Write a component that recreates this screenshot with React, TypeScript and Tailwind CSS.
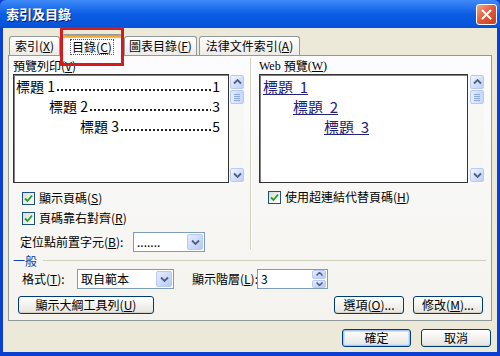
import { FC, ReactNode } from "react";

const FONT = { fontFamily: '"Noto Sans CJK TC", "Noto Sans", sans-serif' };

const Mn: FC<{ text: string; k: string; tail?: string }> = ({ text, k, tail = "" }) => (
  <>
    {text}(<span className="underline">{k}</span>){tail}
  </>
);

const Arrow: FC<{ down?: boolean }> = ({ down }) => (
  <svg width="9" height="6" viewBox="0 0 9 6">
    <path
      d={down ? "M1 1.5 L4.5 5 L8 1.5" : "M1 4.5 L4.5 1 L8 4.5"}
      fill="none"
      stroke="#4d6185"
      strokeWidth="1.8"
    />
  </svg>
);

const ScrollBtn: FC<{ down?: boolean }> = ({ down }) => (
  <div className="w-[14px] h-[14px] rounded-[2px] border border-[#b7cbf5] bg-linear-to-br from-[#f3f7ff] to-[#bccdf5] flex items-center justify-center">
    <Arrow down={down} />
  </div>
);

const Scrollbar: FC = () => (
  <div className="w-[14px] h-[107px] mt-[1px] flex flex-col bg-[#f7f7f4]">
    <ScrollBtn />
    <div className="mt-[1px] w-[14px] h-[14px] rounded-[2px] border border-[#b7cbf5] bg-linear-to-r from-[#e4ecfd] to-[#c6d6fb] flex flex-col items-center justify-center gap-[1px]">
      <div className="w-[6px] h-px bg-[#8ea6dc]" />
      <div className="w-[6px] h-px bg-[#8ea6dc]" />
      <div className="w-[6px] h-px bg-[#8ea6dc]" />
      <div className="w-[6px] h-px bg-[#8ea6dc]" />
    </div>
    <div className="flex-1" />
    <ScrollBtn down />
  </div>
);

const Check: FC<{ children: ReactNode }> = ({ children }) => (
  <div className="h-[20px] flex items-center gap-[4px] text-[12px] leading-[14px] text-black whitespace-nowrap">
    <div className="w-[13px] h-[13px] border border-[#1c5180] bg-linear-to-br from-[#dcdcd7] to-white flex items-center justify-center">
      <svg width="9" height="9" viewBox="0 0 9 9">
        <path d="M1 4.5 L3.5 7 L8 1.5" fill="none" stroke="#21a121" strokeWidth="1.8" />
      </svg>
    </div>
    <span>{children}</span>
  </div>
);

const DropBtn: FC = () => (
  <div className="w-[16px] h-[16px] m-px rounded-[2px] border border-[#b7cbf5] bg-linear-to-br from-[#e6eeff] to-[#b6c9f5] flex items-center justify-center">
    <Arrow down />
  </div>
);

const Select: FC<{ w: string; value: string }> = ({ w, value }) => (
  <div className={`${w} h-[20px] shrink-0 border border-[#7f9db9] bg-white flex items-center justify-between`}>
    <span className="pl-[3px] text-[12px] leading-[14px] text-black whitespace-nowrap">{value}</span>
    <DropBtn />
  </div>
);

const Button: FC<{ w: string; def?: boolean; children: ReactNode }> = ({ w, def, children }) => (
  <div
    className={`${w} h-[18px] shrink-0 rounded-[3px] border border-[#003c74] bg-linear-to-b from-white to-[#e6e5de] flex items-center justify-center text-[12px] leading-[14px] text-black whitespace-nowrap ${
      def ? "shadow-[inset_0_0_0_1px_#a9c4f3,inset_0_0_0_2px_#cee0fb]" : "shadow-[inset_0_-1px_0_#d6d0c5]"
    }`}
  >
    {children}
  </div>
);

const Tab: FC<{ w: string; active?: boolean; children: ReactNode }> = ({ w, active, children }) =>
  active ? (
    <div className={`${w} h-[22px] -mb-px relative z-10 rounded-t-[3px] border border-b-0 border-[#919b9c] bg-[#fcfcfe] flex flex-col`}>
      <div className="h-[3px] rounded-t-[2px] bg-linear-to-b from-[#e68b2c] to-[#ffc73c]" />
      <div className="flex-1 flex items-center justify-center text-[12px] text-black">
        <span className="outline-1 outline-dotted outline-[#555] px-px leading-[14px] whitespace-nowrap">{children}</span>
      </div>
    </div>
  ) : (
    <div className={`${w} h-[19px] rounded-t-[3px] border border-b-0 border-[#919b9c] bg-linear-to-b from-white to-[#ecebe6] flex items-center justify-center text-[12px] leading-[14px] text-black whitespace-nowrap`}>
      {children}
    </div>
  );

const TocLine: FC<{ indent: string; label: string; page: string }> = ({ indent, label, page }) => (
  <div className={`h-[20px] flex items-center ${indent} pr-[8px] text-[14px] leading-[16px] text-black whitespace-nowrap`}>
    <span>{label}</span>
    <span className="flex-1 min-w-0 self-end mb-[5px] mx-[1px] h-[2px] bg-[radial-gradient(circle,#222_0.8px,transparent_1.1px)] bg-size-[4px_2px] bg-repeat-x" />
    <span>{page}</span>
  </div>
);

const App: FC = () => (
  <div className="w-[500px] h-[356px] bg-[#0a3fd0] flex flex-col overflow-hidden" style={FONT}>
    {/* title bar */}
    <div className="h-[28px] shrink-0 bg-linear-to-b from-[#3d8af7] via-[#0a5de4] to-[#0652d6] flex items-center justify-between pl-[6px] pr-[3px] rounded-t-[6px]">
      <span className="text-[13px] leading-[16px] font-bold text-white [text-shadow:1px_1px_0_#0a1e6e]">索引及目錄</span>
      <div className="w-[21px] h-[21px] rounded-[3px] border border-white bg-linear-to-br from-[#f0a58a] via-[#e0583a] to-[#c4401e] flex items-center justify-center">
        <svg width="11" height="11" viewBox="0 0 11 11">
          <path d="M1.5 1.5 L9.5 9.5 M9.5 1.5 L1.5 9.5" stroke="white" strokeWidth="2" strokeLinecap="round" />
        </svg>
      </div>
    </div>

    {/* body */}
    <div className="flex-1 mx-[3px] mb-[4px] bg-[#ece9d8] flex flex-col px-[5px] pt-[5px]">
      {/* tabs */}
      <div className="relative h-[22px] shrink-0 flex items-end pl-[1px] gap-[2px]">
        <Tab w="w-[51px]">
          <Mn text="索引" k="X" />
        </Tab>
        <Tab w="w-[60px]" active>
          <Mn text="目錄" k="C" />
        </Tab>
        <Tab w="w-[73px]">
          <Mn text="圖表目錄" k="F" />
        </Tab>
        <Tab w="w-[101px]">
          <Mn text="法律文件索引" k="A" />
        </Tab>
        <div className="absolute left-[52px] top-[-6px] w-[64px] h-[39px] border-[3px] border-[#d41c1c] z-20 pointer-events-none" />
      </div>

      {/* panel */}
      <div className="h-[266px] shrink-0 border border-[#919b9c] bg-linear-to-b from-[#fcfcfe] to-[#f4f3ee] flex flex-col">
        <div className="flex h-[197px] shrink-0">
          {/* left */}
          <div className="w-[241px] pl-[4px] pt-[1px] flex flex-col">
            <div className="h-[17px] flex items-center text-[12px] leading-[14px] text-black">
              <Mn text="預覽列印" k="V" />
            </div>
            <div className="flex gap-[1px]">
              <div className="w-[216px] h-[109px] border border-[#333] bg-white pt-[1px] shadow-[inset_1px_1px_0_#808080]">
                <TocLine indent="pl-[2px]" label="標題 1" page="1" />
                <TocLine indent="pl-[35px]" label="標題 2" page="3" />
                <TocLine indent="pl-[66px]" label="標題 3" page="5" />
              </div>
              <Scrollbar />
            </div>
            <div className="mt-[5px] pl-[9px]">
              <Check>
                <Mn text="顯示頁碼" k="S" />
              </Check>
              <Check>
                <Mn text="頁碼靠右對齊" k="R" />
              </Check>
            </div>
            <div className="mt-[4px] pl-[7px] flex items-center">
              <span className="w-[113px] text-[12px] leading-[14px] text-black whitespace-nowrap">
                <Mn text="定位點前置字元" k="B" tail=":" />
              </span>
              <Select w="w-[72px]" value="......." />
            </div>
          </div>

          {/* divider */}
          <div className="w-[2px] mt-[2px] mb-[3px] border-l border-[#d0d0bf] border-r border-r-white" />

          {/* right */}
          <div className="flex-1 pl-[7px] pt-[1px] flex flex-col">
            <div className="h-[17px] flex items-center text-[12px] leading-[14px] text-black" style={{ fontFamily: '"Liberation Serif", "Noto Sans CJK TC", serif' }}>
              Web&nbsp;<span style={FONT}>預覽</span>(<span className="underline">W</span>)
            </div>
            <div className="flex gap-[2px]">
              <div className="w-[209px] h-[109px] border border-[#333] bg-white pt-[1px] shadow-[inset_1px_1px_0_#808080] text-[15px] leading-[17px] text-[#23237a]">
                <div className="h-[20px] pl-[3px] flex items-center">
                  <span className="underline">標題&nbsp;&nbsp;1</span>
                </div>
                <div className="h-[20px] pl-[33px] flex items-center">
                  <span className="underline">標題&nbsp;&nbsp;2</span>
                </div>
                <div className="h-[20px] pl-[64px] flex items-center">
                  <span className="underline">標題&nbsp;&nbsp;3</span>
                </div>
              </div>
              <Scrollbar />
            </div>
            <div className="mt-[4px] pl-[9px]">
              <Check>
                <Mn text="使用超連結代替頁碼" k="H" />
              </Check>
            </div>
          </div>
        </div>

        {/* general group */}
        <div className="h-[15px] shrink-0 flex items-center pl-[4px] pr-[5px]">
          <span className="text-[12px] leading-[14px] text-[#1a3fa6]">一般</span>
          <div className="flex-1 ml-[6px] h-px bg-[#d0d0bf]" />
        </div>
        <div className="mt-[1px] h-[20px] shrink-0 flex items-center pl-[13px]">
          <span className="w-[55px] shrink-0 text-[12px] leading-[14px] text-black whitespace-nowrap">
            <Mn text="格式" k="T" tail=":" />
          </span>
          <Select w="w-[97px]" value="取自範本" />
          <span className="ml-[18px] w-[65px] shrink-0 text-[12px] leading-[14px] text-black whitespace-nowrap">
            <Mn text="顯示階層" k="L" tail=":" />
          </span>
          <div className="w-[71px] h-[20px] shrink-0 border border-[#7f9db9] bg-white flex items-center justify-between">
            <span className="pl-[3px] text-[12px] leading-[14px] text-black">3</span>
            <div className="w-[15px] h-[18px] flex flex-col gap-px pr-px">
              <div className="flex-1 rounded-[2px] border border-[#b7cbf5] bg-linear-to-br from-[#e6eeff] to-[#b6c9f5] flex items-center justify-center">
                <svg width="7" height="4" viewBox="0 0 7 4">
                  <path d="M0.5 3.5 L3.5 0.5 L6.5 3.5" fill="none" stroke="#4d6185" strokeWidth="1.5" />
                </svg>
              </div>
              <div className="flex-1 rounded-[2px] border border-[#b7cbf5] bg-linear-to-br from-[#e6eeff] to-[#b6c9f5] flex items-center justify-center">
                <svg width="7" height="4" viewBox="0 0 7 4">
                  <path d="M0.5 0.5 L3.5 3.5 L6.5 0.5" fill="none" stroke="#4d6185" strokeWidth="1.5" />
                </svg>
              </div>
            </div>
          </div>
        </div>
        <div className="mt-[7px] flex items-center pl-[9px] pr-[8px]">
          <Button w="w-[136px]">
            <Mn text="顯示大綱工具列" k="U" />
          </Button>
          <div className="flex-1" />
          <Button w="w-[70px]">
            <Mn text="選項" k="O" tail="..." />
          </Button>
          <div className="w-[9px]" />
          <Button w="w-[70px]">
            <Mn text="修改" k="M" tail="..." />
          </Button>
        </div>
      </div>

      {/* bottom buttons */}
      <div className="mt-[8px] flex justify-end gap-[10px] pr-[1px]">
        <Button w="w-[69px]" def>
          確定
        </Button>
        <Button w="w-[70px]">取消</Button>
      </div>
    </div>
  </div>
);

export default App;
